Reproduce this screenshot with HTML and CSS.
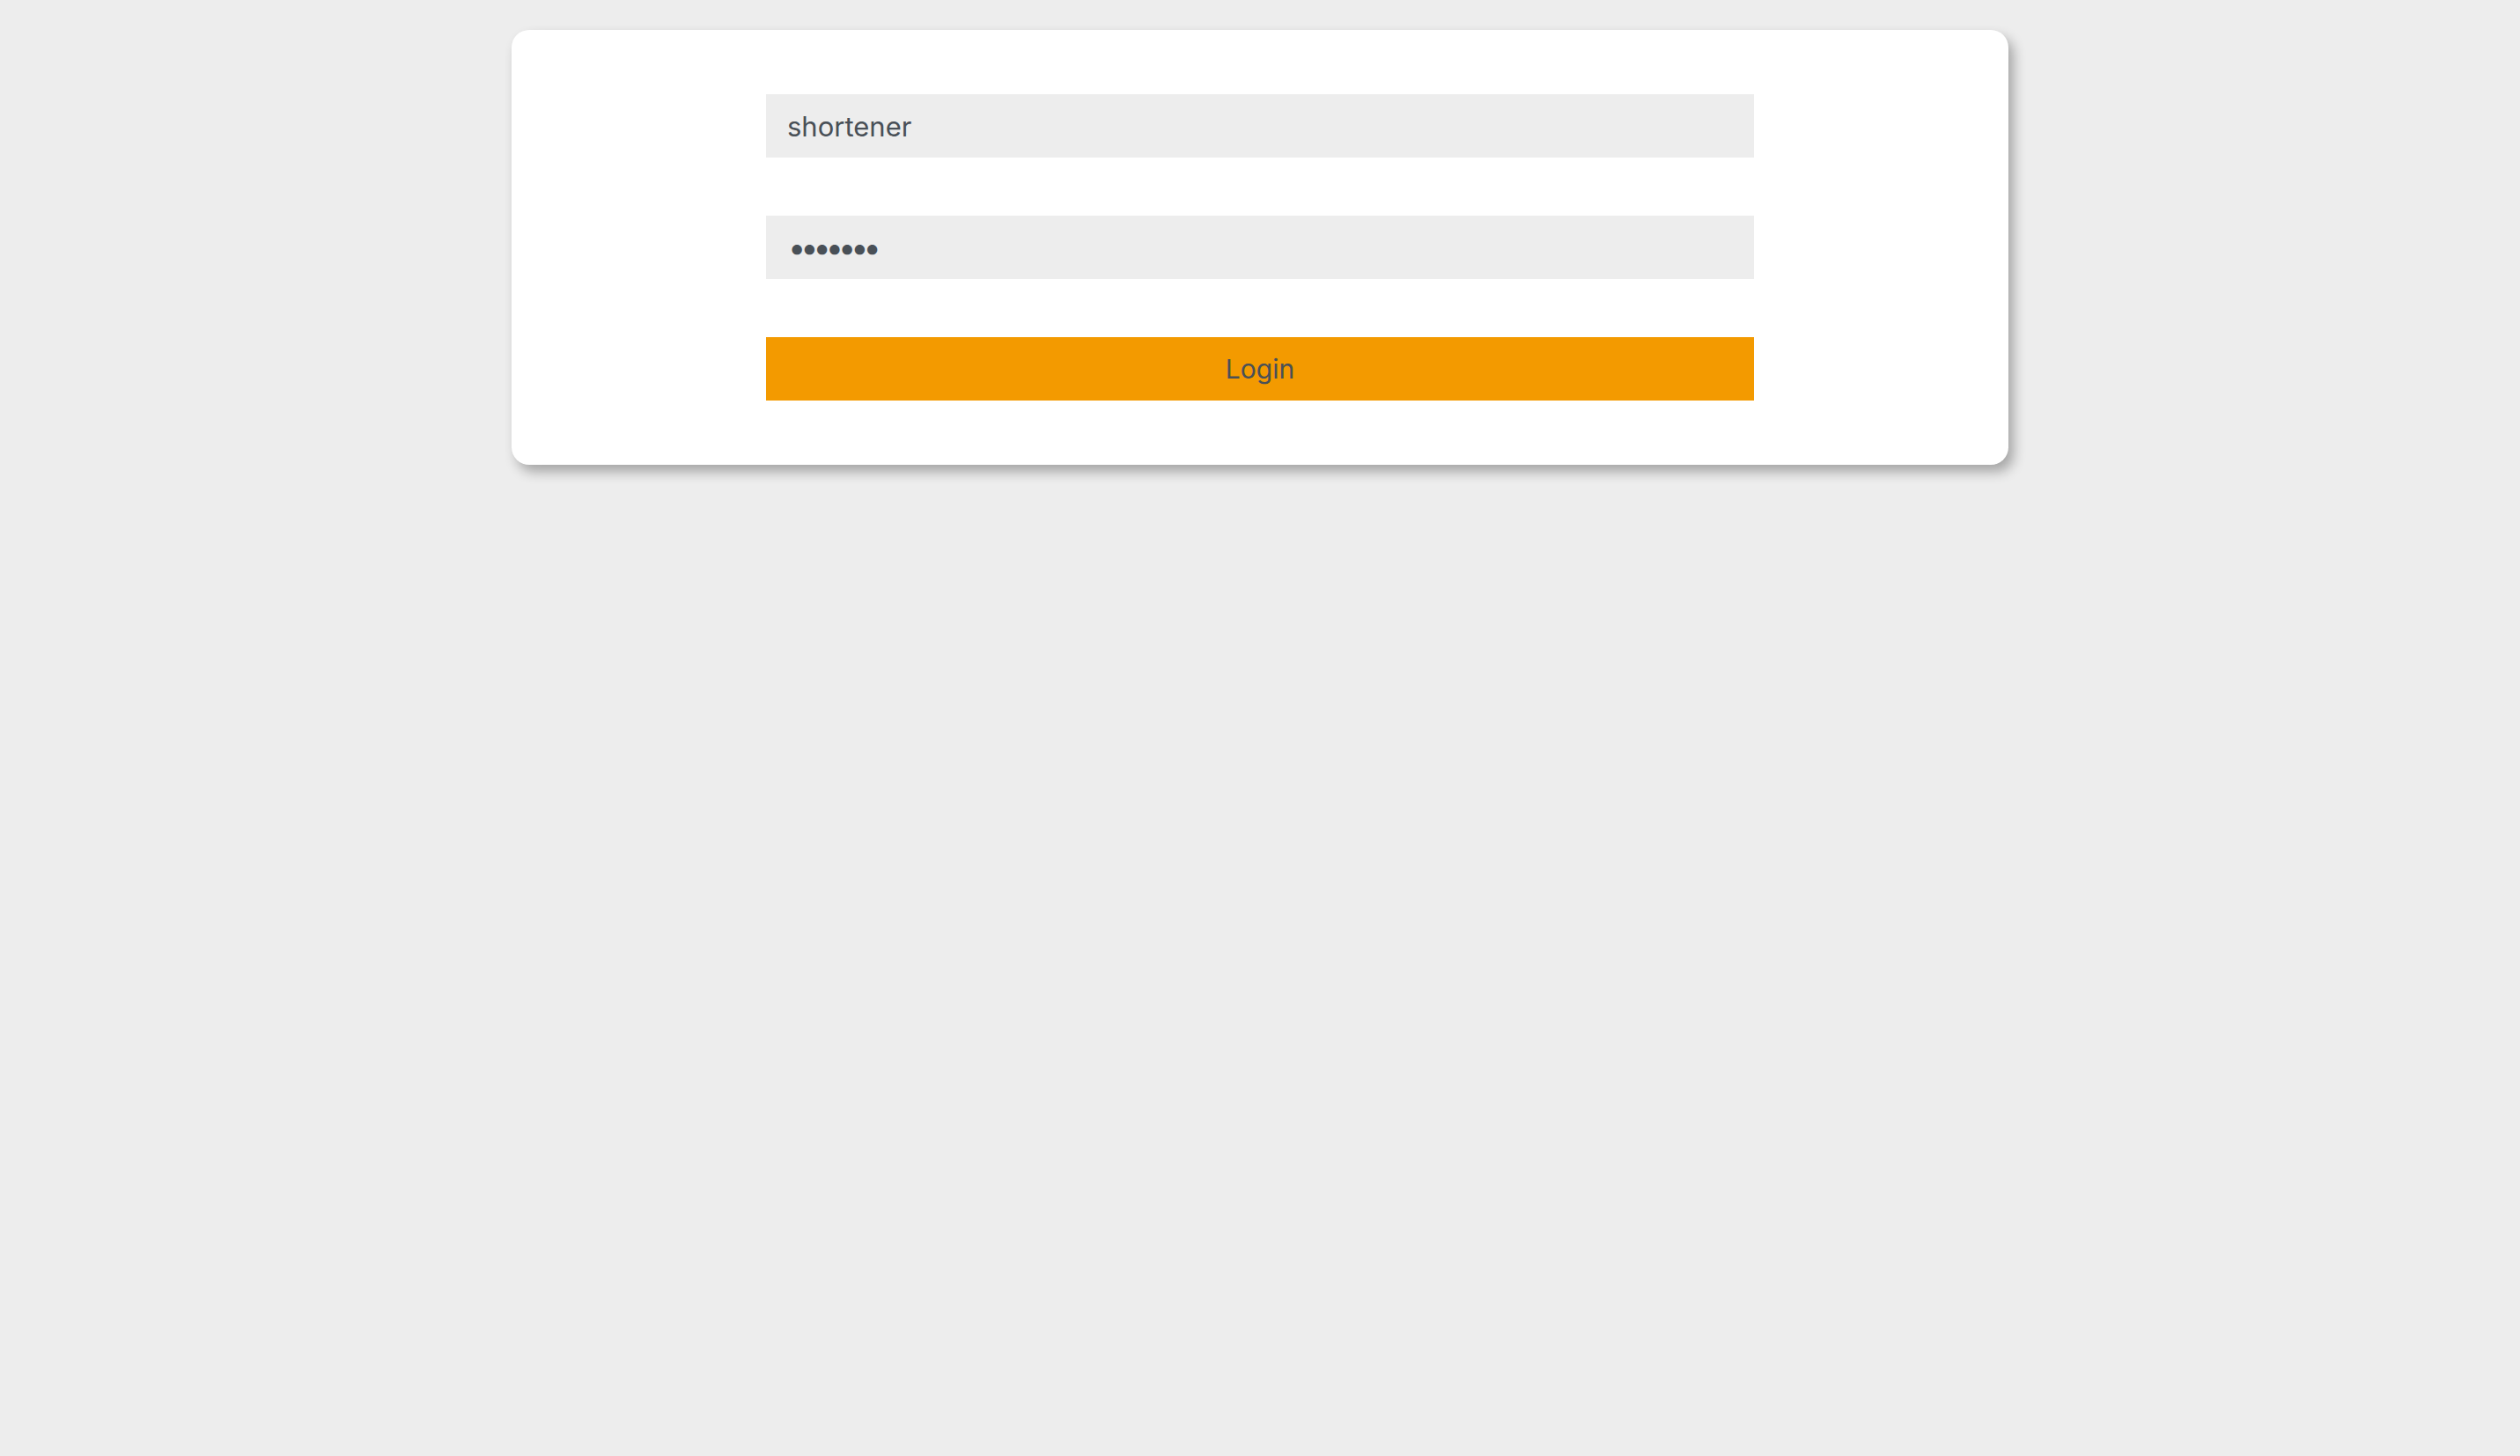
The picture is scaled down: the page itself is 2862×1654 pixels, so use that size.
FILE: index.html
```html
<!DOCTYPE html>
<html lang="en">
<head>
<meta charset="utf-8">
<title>Login</title>
<link rel="stylesheet" href="styles.css">
</head>
<body>
<main class="page">
  <form class="card">
    <input class="field" type="text" value="shortener">
    <input class="field field-password" type="password" value="1234567">
    <button class="btn" type="button">Login</button>
  </form>
</main>
</body>
</html>
```
FILE: styles.css
```css
html, body {
  margin: 0;
  padding: 0;
  background: #ededed;
}
.page {
  display: flex;
  justify-content: center;
  padding-top: 34px;
  padding-bottom: 40px;
}
.card {
  width: 1700px;
  box-sizing: border-box;
  background: #ffffff;
  border-radius: 20px;
  box-shadow: 6px 8px 14px rgba(0, 0, 0, 0.3);
  padding: 73px 289px;
  display: flex;
  flex-direction: column;
  gap: 66px;
  margin: 0;
}
.field, .btn {
  display: block;
  width: 100%;
  height: 72px;
  box-sizing: border-box;
  border: none;
  outline: none;
  margin: 0;
  font-family: Inter, "Noto Sans", "Liberation Sans", sans-serif;
  font-size: 30px;
  color: #495057;
}
.field {
  background: #ededed;
  padding: 0 24px;
  font-size: 31px;
}
.field-password {
  font-size: 36px;
  letter-spacing: -6px;
  padding-left: 25px;
}
.btn {
  background: #f39a00;
  text-align: center;
  padding: 0;
  cursor: pointer;
}
```
